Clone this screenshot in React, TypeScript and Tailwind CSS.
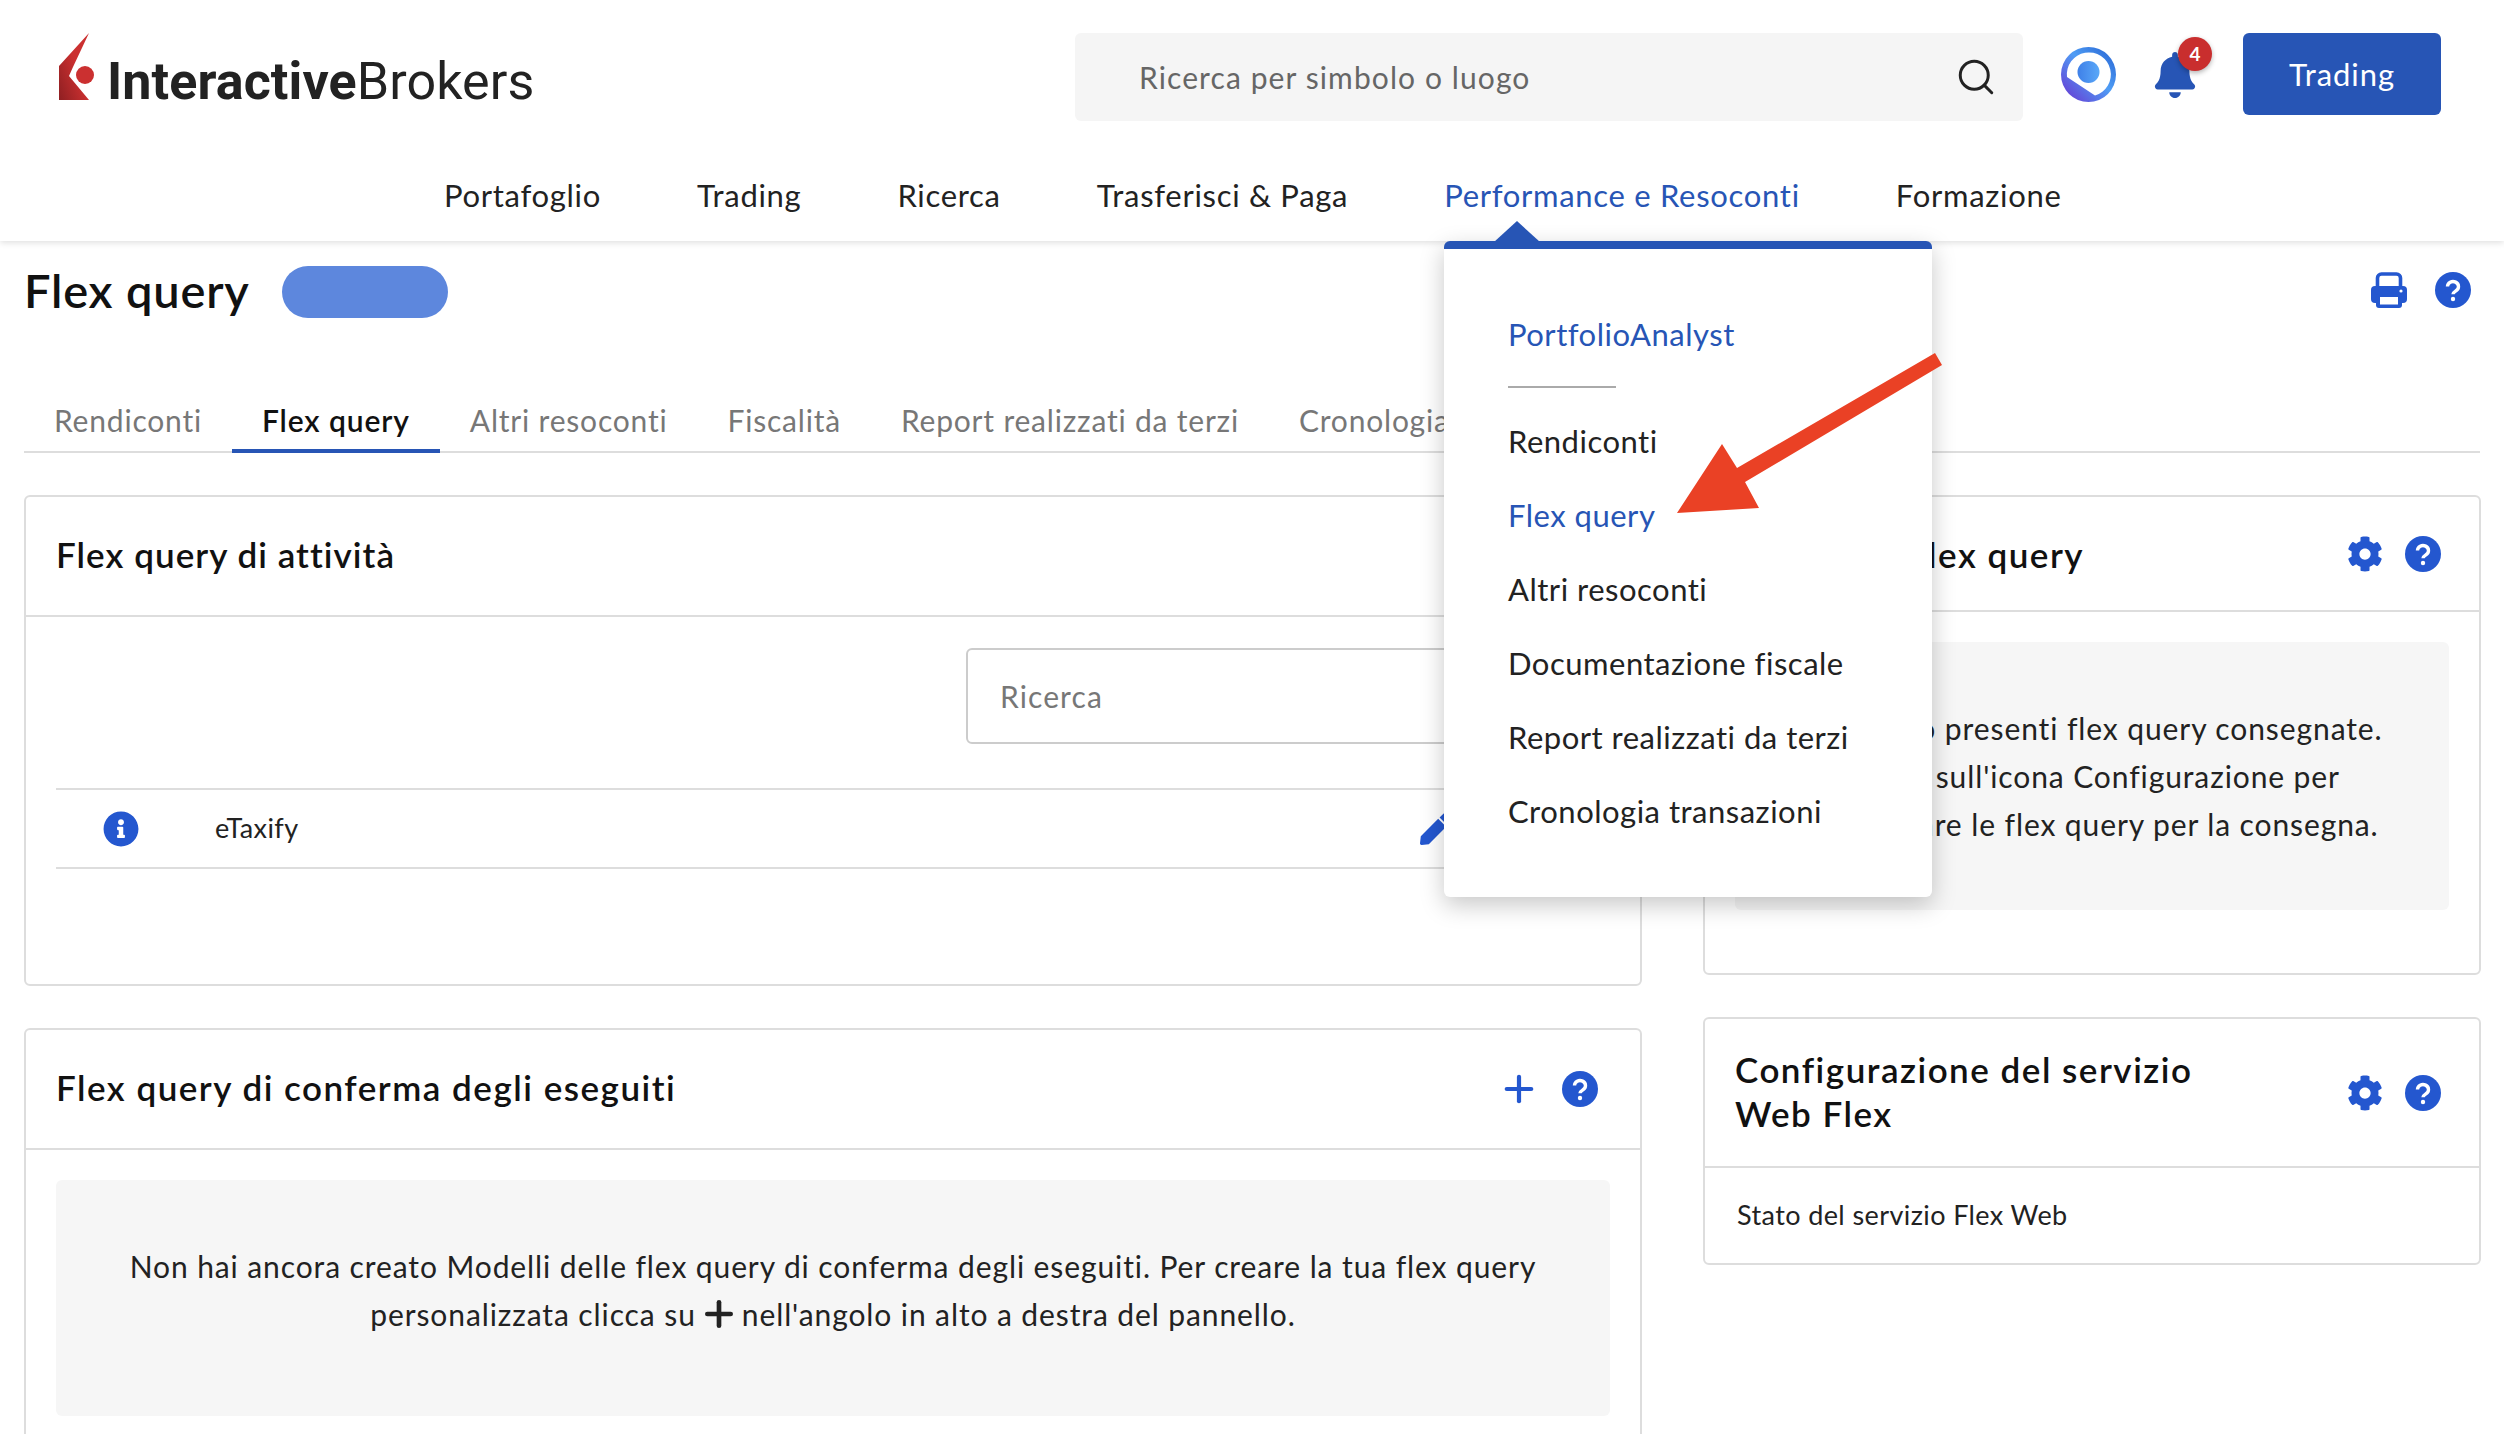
import { Search, Plus } from "lucide-react";
import { FaBell, FaCog, FaInfoCircle, FaPen } from "react-icons/fa";

const navItems = ["Portafoglio", "Trading", "Ricerca", "Trasferisci & Paga", "Performance e Resoconti", "Formazione"];
const tabs = ["Rendiconti", "Flex query", "Altri resoconti", "Fiscalità", "Report realizzati da terzi", "Cronologia transazioni"];
const menuItems = ["Rendiconti", "Flex query", "Altri resoconti", "Documentazione fiscale", "Report realizzati da terzi", "Cronologia transazioni"];

function Logo() {
  return (
    <div className="flex w-[474px] items-start">
      <svg width="36" height="67" viewBox="0 0 36 67" className="shrink-0">
        <defs>
          <linearGradient id="logoRed" x1="0" y1="1" x2="0.6" y2="0.5">
            <stop offset="0" stopColor="#8e1f22" />
            <stop offset="1" stopColor="#cb3030" />
          </linearGradient>
        </defs>
        <polygon points="30,0 0,33 0,67 30,67 10,43 14,34" fill="url(#logoRed)" />
        <circle cx="26" cy="42" r="9" fill="#cb3030" />
      </svg>
      <div className="ml-[12px] mt-[19px] whitespace-nowrap font-['Roboto',sans-serif] text-[52px] leading-[60px] tracking-[0.1px] text-[#222]">
        <span className="font-bold">Interactive</span>
        <span>Brokers</span>
      </div>
    </div>
  );
}

function Avatar() {
  return (
    <svg width="55" height="55" viewBox="0 0 55 55" className="mt-[14px] ml-[38px] shrink-0">
      <defs>
        <linearGradient id="ring" x1="0" y1="1" x2="1" y2="0">
          <stop offset="0" stopColor="#6a2fd0" />
          <stop offset="0.55" stopColor="#4f9df5" />
          <stop offset="1" stopColor="#2460d0" />
        </linearGradient>
        <linearGradient id="dot" x1="0" y1="0" x2="1" y2="0">
          <stop offset="0" stopColor="#3f80e8" />
          <stop offset="1" stopColor="#5aa8f8" />
        </linearGradient>
      </defs>
      <circle cx="27.5" cy="27.5" r="27.5" fill="url(#ring)" />
      <path d="M6 30 A22 22 0 1 1 34 48.5 Z" fill="#fff" />
      <circle cx="27.5" cy="25" r="11" fill="url(#dot)" />
    </svg>
  );
}

function Bell() {
  return (
    <div className="relative ml-[38px] mt-[19px] h-[46px] w-[42px] shrink-0 text-[#2755b5]">
      <FaBell className="h-[46px] w-[42px]" />
      <div className="absolute left-[24px] top-[-15px] flex h-[34px] w-[34px] items-center justify-center rounded-full bg-[#c92e2e] text-[19px] font-bold text-white shadow-[0_2px_5px_rgba(0,0,0,0.3)]">
        4
      </div>
    </div>
  );
}

function Help() {
  return (
    <svg width="36" height="36" viewBox="0 0 36 36" className="shrink-0">
      <circle cx="18" cy="18" r="18" fill="#2457cf" />
      <path d="M12.5 14.5a5.5 5 0 1 1 8.5 4.2c-2 1.3-3 1.9-3 3.6" fill="none" stroke="#fff" strokeWidth="3.4" />
      <circle cx="18" cy="27" r="2.2" fill="#fff" />
    </svg>
  );
}

function Printer() {
  return (
    <svg width="36" height="36" viewBox="0 0 36 36" className="shrink-0">
      <path d="M6.5 14V6a4 4 0 0 1 4-4h15a4 4 0 0 1 4 4v8" fill="none" stroke="#2457cf" strokeWidth="3.6" />
      <rect x="0" y="14" width="36" height="17" rx="4" fill="#2457cf" />
      <rect x="5" y="22" width="26" height="14" rx="3" fill="#2457cf" />
      <rect x="9" y="25" width="18" height="7.5" fill="#fff" />
      <circle cx="30" cy="19" r="1.6" fill="#fff" />
    </svg>
  );
}

function Panel({ title, icons, children, headerClass, titleClass }: { title: React.ReactNode; icons?: React.ReactNode; children: React.ReactNode; headerClass: string; titleClass?: string }) {
  return (
    <div className="overflow-hidden rounded-md border-2 border-[#ddd] bg-white">
      <div className={`flex items-center justify-between border-b-2 border-[#ddd] ${headerClass}`}>
        <div className={`text-[35px] leading-[44px] font-semibold tracking-[1.5px] text-[#111] ${titleClass ?? ""}`}>{title}</div>
        <div className="flex items-center">{icons}</div>
      </div>
      {children}
    </div>
  );
}

export default function App() {
  return (
    <div className="relative h-[1434px] w-[2504px] overflow-hidden bg-white font-['Lato',sans-serif] text-[#222]">
      <header className="relative z-10 h-[241px] bg-white shadow-[0_2px_6px_rgba(0,0,0,0.12)]">
        <div className="flex items-start pl-[59px] pt-[33px]">
          <Logo />
          <div className="ml-[542px] flex h-[88px] w-[948px] shrink-0 items-center justify-between rounded-md bg-[#f5f5f5] pl-[64px] pr-[26px]">
            <span className="text-[30px] tracking-[1.1px] text-[#666]">Ricerca per simbolo o luogo</span>
            <Search className="h-[42px] w-[42px] text-[#222]" strokeWidth={1.7} />
          </div>
          <Avatar />
          <Bell />
          <div className="ml-[47px] flex h-[82px] w-[198px] shrink-0 items-center justify-center rounded-md bg-[#2755b5] text-[31px] tracking-[0.9px] text-white">
            Trading
          </div>
        </div>
        <nav className="mt-[54px] flex h-[40px] items-center gap-[96px] pl-[444px] text-[31px] tracking-[0.7px]">
          {navItems.map((item) => (
            <span key={item} className={item.startsWith("Performance") ? "whitespace-nowrap text-[#2755b5]" : "whitespace-nowrap"}>
              {item}
            </span>
          ))}
        </nav>
      </header>

      <main className="px-[24px]">
        <div className="flex h-[98px] items-center">
          <h1 className="text-[47px] leading-none font-semibold tracking-[0.8px] text-[#111]">Flex query</h1>
          <div className="ml-[32px] mt-[3px] h-[52px] w-[166px] rounded-full bg-[#5d87dd]" />
          <div className="ml-auto flex items-center gap-[28px] pr-[9px]">
            <Printer />
            <Help />
          </div>
        </div>

        <div className="mt-[48px] flex h-[66px] border-b-2 border-[#ddd] text-[30px] tracking-[0.8px] text-[#777]">
          {tabs.map((tab) => (
            <div
              key={tab}
              className={
                tab === "Flex query"
                  ? "flex h-[66px] items-center whitespace-nowrap border-b-4 border-[#2755b5] px-[30px] pt-[4px] font-semibold tracking-[0.9px] text-[#111]"
                  : "flex h-[66px] items-center whitespace-nowrap px-[30px]"
              }
            >
              {tab}
            </div>
          ))}
        </div>

        <div className="mt-[42px] grid grid-cols-[1618px_778px] gap-x-[61px]">
          <div className="flex flex-col gap-[42px]">
            <Panel title="Flex query di attività" headerClass="h-[120px] pl-[30px] pr-[42px]" titleClass="mb-[4px] tracking-[1.05px]!">
              <div className="h-[367px] px-[30px]">
                <div className="flex justify-end pt-[31px]">
                  <div className="flex h-[96px] w-[644px] items-center rounded-md border-2 border-[#ccc] pl-[32px] text-[30px] tracking-[1.1px] text-[#777]">
                    Ricerca
                  </div>
                </div>
                <div className="mt-[44px] flex h-[81px] items-center border-y-2 border-[#ddd] pl-[47px] text-[27px] tracking-[0.4px]">
                  <FaInfoCircle className="h-[36px] w-[36px] text-[#2457cf]" />
                  <span className="ml-[76px]">eTaxify</span>
                  <FaPen className="ml-auto mr-[158px] h-[32px] w-[32px] text-[#2457cf]" />
                </div>
              </div>
            </Panel>
            <Panel
              title="Flex query di conferma degli eseguiti"
              headerClass="h-[120px] pl-[30px] pr-[42px]"
              titleClass="mb-[4px]"
              icons={
                <>
                  <Plus className="mr-[22px] h-[42px] w-[42px] text-[#2457cf]" strokeWidth={2.4} />
                  <Help />
                </>
              }
            >
              <div className="px-[30px] pb-[60px] pt-[30px]">
                <div className="flex h-[236px] flex-col items-center justify-center rounded-md bg-[#f6f6f6] pb-[16px] text-center text-[30px] leading-[48px] tracking-[0.9px]">
                  <p>Non hai ancora creato Modelli delle flex query di conferma degli eseguiti. Per creare la tua flex query</p>
                  <p className="flex items-center">
                    personalizzata clicca su
                    <Plus className="mx-[3px] h-[40px] w-[40px] text-[#222]" strokeWidth={2.8} />
                    nell'angolo in alto a destra del pannello.
                  </p>
                </div>
              </div>
            </Panel>
          </div>

          <div className="flex flex-col gap-[42px]">
            <Panel
              title="Consegna flex query"
              headerClass="h-[115px] pl-[35px] pr-[38px]"
              icons={
                <>
                  <FaCog className="mr-[22px] h-[36px] w-[36px] text-[#2457cf]" />
                  <Help />
                </>
              }
            >
              <div className="h-[361px] px-[30px] pt-[30px]">
                <div className="flex h-[268px] flex-col items-center justify-center rounded-md bg-[#f6f6f6] text-center text-[30px] leading-[48px] tracking-[0.9px]">
                  <p>Non sono presenti flex query consegnate.</p>
                  <p>Clicca sull'icona Configurazione per</p>
                  <p>selezionare le flex query per la consegna.</p>
                </div>
              </div>
            </Panel>
            <Panel
              title={
                <>
                  Configurazione del servizio
                  <br />
                  Web Flex
                </>
              }
              headerClass="h-[149px] pl-[30px] pr-[38px]"
              titleClass="mb-[4px]"
              icons={
                <>
                  <FaCog className="mr-[22px] h-[36px] w-[36px] text-[#2457cf]" />
                  <Help />
                </>
              }
            >
              <div className="flex h-[95px] items-center pl-[32px] text-[27px] tracking-[0.4px]">Stato del servizio Flex Web</div>
            </Panel>
          </div>
        </div>
      </main>

      {/* menu aperto sopra la pagina */}
      <div className="absolute left-[1444px] top-[241px] z-20 h-[656px] w-[488px] rounded-md border-t-[8px] border-[#2755b5] bg-white pl-[64px] pt-[65px] text-[31px] tracking-[0.5px] shadow-[0_8px_24px_rgba(0,0,0,0.22)]">
        <div className="absolute left-[50px] top-[-28px] h-0 w-0 border-x-[23px] border-b-[21px] border-x-transparent border-b-[#2755b5]" />
        <div className="leading-[40px] text-[#2755b5]">PortfolioAnalyst</div>
        <div className="mt-[32px] h-[2px] w-[108px] bg-[#aaa]" />
        <div className="mt-[16px] flex flex-col">
          {menuItems.map((item) => (
            <div key={item} className={item === "Flex query" ? "flex h-[74px] items-center text-[#2755b5]" : "flex h-[74px] items-center"}>
              {item}
            </div>
          ))}
        </div>
      </div>

      {/* freccia rossa di annotazione */}
      <svg className="absolute left-0 top-0 z-30" width="2504" height="1434" viewBox="0 0 2504 1434">
        <polygon points="1935,353 1942,365 1745,482 1759,508 1677,513 1722,444 1737,468" fill="#ea4125" />
      </svg>
    </div>
  );
}
